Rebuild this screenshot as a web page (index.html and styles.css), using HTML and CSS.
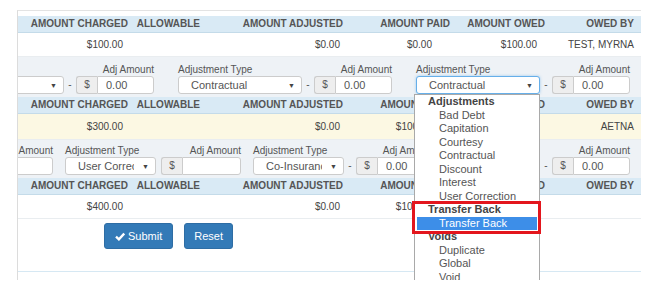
FILE: index.html
```html
<!DOCTYPE html>
<html lang="en">
<head>
    <meta charset="UTF-8">
    <title>Adjustments</title>
    <link rel="stylesheet" href="styles.css">
</head>
<body>

<div class="panel">
    <div class="cols head">
        <div>Amount Charged</div><div>Allowable</div><div>Amount Adjusted</div><div>Amount Paid</div><div>Amount Owed</div><div>Owed By</div>
    </div>
    <div class="cols vals">
        <div class="v1">$100.00</div><div></div><div class="v3">$0.00</div><div class="v4">$0.00</div><div class="v5">$100.00</div><div>TEST, MYRNA</div>
    </div>

    <!-- first claim line, adjustment rows -->
    <div class="adj adj-one">
        <div class="grp">
            <div class="grp-labels"><span>Adjustment Type</span><span>Adj Amount</span></div>
            <div class="grp-ctrls">
                <div class="sel"><span></span><i>&#9660;</i></div>
                <span class="dash">-</span><span class="addon">$</span><input class="amt" value="0.00">
            </div>
        </div>
        <div class="grp">
            <div class="grp-labels"><span>Adjustment Type</span><span>Adj Amount</span></div>
            <div class="grp-ctrls">
                <div class="sel"><span>Contractual</span><i>&#9660;</i></div>
                <span class="dash">-</span><span class="addon">$</span><input class="amt" value="0.00">
            </div>
        </div>
        <div class="grp">
            <div class="grp-labels"><span>Adjustment Type</span><span>Adj Amount</span></div>
            <div class="grp-ctrls">
                <div class="sel focus"><span>Contractual</span><i>&#9660;</i></div>
                <span class="dash">-</span><span class="addon">$</span><input class="amt" value="0.00">
            </div>
        </div>
    </div>

    <div class="cols head">
        <div>Amount Charged</div><div>Allowable</div><div>Amount Adjusted</div><div>Amount Paid</div><div>Amount Owed</div><div>Owed By</div>
    </div>
    <div class="cols vals warn">
        <div class="v1">$300.00</div><div></div><div class="v3">$0.00</div><div class="v4">$100.00</div><div class="v5"></div><div>AETNA</div>
    </div>

    <div class="adj adj-two">
        <div class="grp">
            <div class="grp-labels"><span>Adjustment Type</span><span>Adj Amount</span></div>
            <div class="grp-ctrls">
                <div class="sel sel-sm"><span>Contractual</span><i>&#9660;</i></div>
                <span class="dash">-</span><span class="addon">$</span><input class="amt" value="">
            </div>
        </div>
        <div class="grp">
            <div class="grp-labels"><span>Adjustment Type</span><span>Adj Amount</span></div>
            <div class="grp-ctrls">
                <div class="sel sel-sm"><span>User Correction</span><i>&#9660;</i></div>
                <span class="nodash"></span><span class="addon">$</span><input class="amt amt-wide" value="">
            </div>
        </div>
        <div class="grp">
            <div class="grp-labels"><span>Adjustment Type</span><span>Adj Amount</span></div>
            <div class="grp-ctrls">
                <div class="sel sel-sm"><span>Co-Insurance</span><i>&#9660;</i></div>
                <span class="dash">-</span><span class="addon">$</span><input class="amt" value="0.00">
            </div>
        </div>
        <div class="grp grp-last">
            <div class="grp-labels"><span>Adjustment Type</span><span>Adj Amount</span></div>
            <div class="grp-ctrls">
                <div class="sel sel-sm"><span>Contractual</span><i>&#9660;</i></div>
                <span class="dash">-</span><span class="addon">$</span><input class="amt" value="0.00">
            </div>
        </div>
    </div>

    <div class="cols head">
        <div>Amount Charged</div><div>Allowable</div><div>Amount Adjusted</div><div>Amount Paid</div><div>Amount Owed</div><div>Owed By</div>
    </div>
    <div class="cols vals">
        <div class="v1">$400.00</div><div></div><div class="v3">$0.00</div><div class="v4">$100.00</div><div class="v5"></div><div></div>
    </div>

    <div class="actions">
        <button class="btn">
            <svg width="10" height="9" viewBox="0 0 10 9"><path d="M1 4.6 L3.9 7.4 L9.2 1.6" stroke="#fff" stroke-width="2.3" fill="none"/></svg>
            Submit
        </button>
        <button class="btn btn-reset">Reset</button>
    </div>

    <!-- open list of the focused adjustment type -->
    <div class="dd">
        <div class="og">Adjustments</div>
        <div class="op">Bad Debt</div>
        <div class="op">Capitation</div>
        <div class="op">Courtesy</div>
        <div class="op">Contractual</div>
        <div class="op">Discount</div>
        <div class="op">Interest</div>
        <div class="op">User Correction</div>
        <div class="og">Transfer Back</div>
        <div class="op hl">Transfer Back</div>
        <div class="og">Voids</div>
        <div class="op">Duplicate</div>
        <div class="op">Global</div>
        <div class="op">Void</div>
    </div>
    <div class="mark"></div>
</div>

</body>
</html>
```

FILE: styles.css
```css
body {
    margin: 0;
    font-family: "Liberation Sans", Arial, sans-serif;
    background-color: #fff;
    color: #555;
}

.panel {
    position: relative;
    margin: 10px 0 0 17px;
    width: 623px;
    border-top: 1px solid #e3e3e3;
    border-left: 1px solid #dcdcdc;
    padding: 5px 0 8px;
}

/* Claim line tables */
.cols {
    display: grid;
    grid-template-columns: 110px 72px 143px 107px 95px 89px;
    padding-right: 7px;
    text-align: right;
    white-space: nowrap;
}

.head {
    height: 17px;
    box-sizing: border-box;
    line-height: 16px;
    background-color: #d9eaf5;
    border-bottom: 1px solid #c4dbe9;
    font-size: 10px;
    font-weight: bold;
    text-transform: uppercase;
    color: #555;
}

.vals {
    height: 24px;
    box-sizing: border-box;
    line-height: 23px;
    font-size: 10px;
    color: #444;
    background-color: #fff;
    border-bottom: 1px solid #e9edf0;
}

.vals.warn {
    height: 26px;
    line-height: 25px;
    background-color: #fcf8e3;
}

.v1 { padding-right: 5px; }
.v3 { padding-right: 3px; }
.v4 { padding-right: 18px; }
.v5 { padding-right: 8px; }

/* Adjustment rows */
.adj {
    display: flex;
    justify-content: flex-end;
    gap: 24px;
    overflow: hidden;
    padding: 6px 11px 3px 0;
    background-color: #eef2f6;
}

.adj-two {
    gap: 12px;
    padding-top: 4px;
}

.grp {
    flex-shrink: 0;
}

.grp-last {
    margin-left: 3px;
}

.grp-labels {
    display: flex;
    justify-content: space-between;
    gap: 4px;
    font-size: 10px;
    line-height: 13px;
    white-space: nowrap;
    color: #555;
}

.grp-ctrls {
    display: flex;
    height: 18px;
}

.sel {
    width: 124px;
    box-sizing: border-box;
    display: flex;
    align-items: center;
    padding: 0 6px 0 12px;
    border: 1px solid #ccc;
    border-radius: 3px;
    background-color: #fff;
    font-size: 11px;
    color: #555;
}

.sel span {
    flex: 1;
    overflow: hidden;
    white-space: nowrap;
}

.sel i {
    font-style: normal;
    font-size: 7px;
    color: #444;
    margin-left: 8px;
}

.sel-sm {
    width: 91px;
}

.sel.focus {
    border-color: #66afe9;
    box-shadow: 0 0 3px rgba(102, 175, 233, 0.6);
}

.dash {
    width: 12px;
    text-align: center;
    font-size: 10px;
    line-height: 18px;
}

.nodash {
    width: 5px;
}

.addon {
    width: 21px;
    box-sizing: border-box;
    border: 1px solid #ccc;
    border-right: 0;
    border-radius: 3px 0 0 3px;
    background-color: #eee;
    text-align: center;
    font-size: 10px;
    line-height: 16px;
    color: #555;
}

.amt {
    width: 57px;
    height: 18px;
    box-sizing: border-box;
    margin: 0;
    padding: 0 0 0 8px;
    border: 1px solid #ccc;
    border-radius: 0 3px 3px 0;
    font: 11px "Liberation Sans", Arial, sans-serif;
    color: #555;
}

.amt-wide {
    width: 59px;
}

/* Buttons */
.actions {
    height: 53px;
    box-sizing: border-box;
    display: flex;
    align-items: flex-start;
    gap: 11px;
    padding: 4px 0 0 86px;
    border-bottom: 1px solid #d6e8f3;
}

.btn {
    height: 26px;
    display: flex;
    align-items: center;
    gap: 3px;
    padding: 0 10px;
    border: 1px solid #2e6da4;
    border-radius: 3px;
    background-color: #337ab7;
    color: #fff;
    font: 11px "Liberation Sans", Arial, sans-serif;
}

.btn-reset {
    padding: 0 9px;
}

/* Open select list */
.dd {
    position: absolute;
    left: 396px;
    top: 83px;
    width: 126px;
    height: 198px;
    overflow: hidden;
    box-sizing: border-box;
    border: 1px solid #a9a9a9;
    border-bottom: 0;
    background-color: #fff;
    font-size: 11px;
    line-height: 13.5px;
    color: #555;
}

.dd .og {
    padding-left: 13px;
    font-weight: bold;
    color: #444;
}

.dd .op {
    padding-left: 24px;
}

.dd .op.hl {
    margin: 0 2px;
    padding-left: 22px;
    background-color: #3d8ee8;
    color: #fff;
}

.mark {
    position: absolute;
    left: 394px;
    top: 190px;
    width: 129px;
    height: 33px;
    box-sizing: border-box;
    border: 3px solid #e3161d;
}
```
